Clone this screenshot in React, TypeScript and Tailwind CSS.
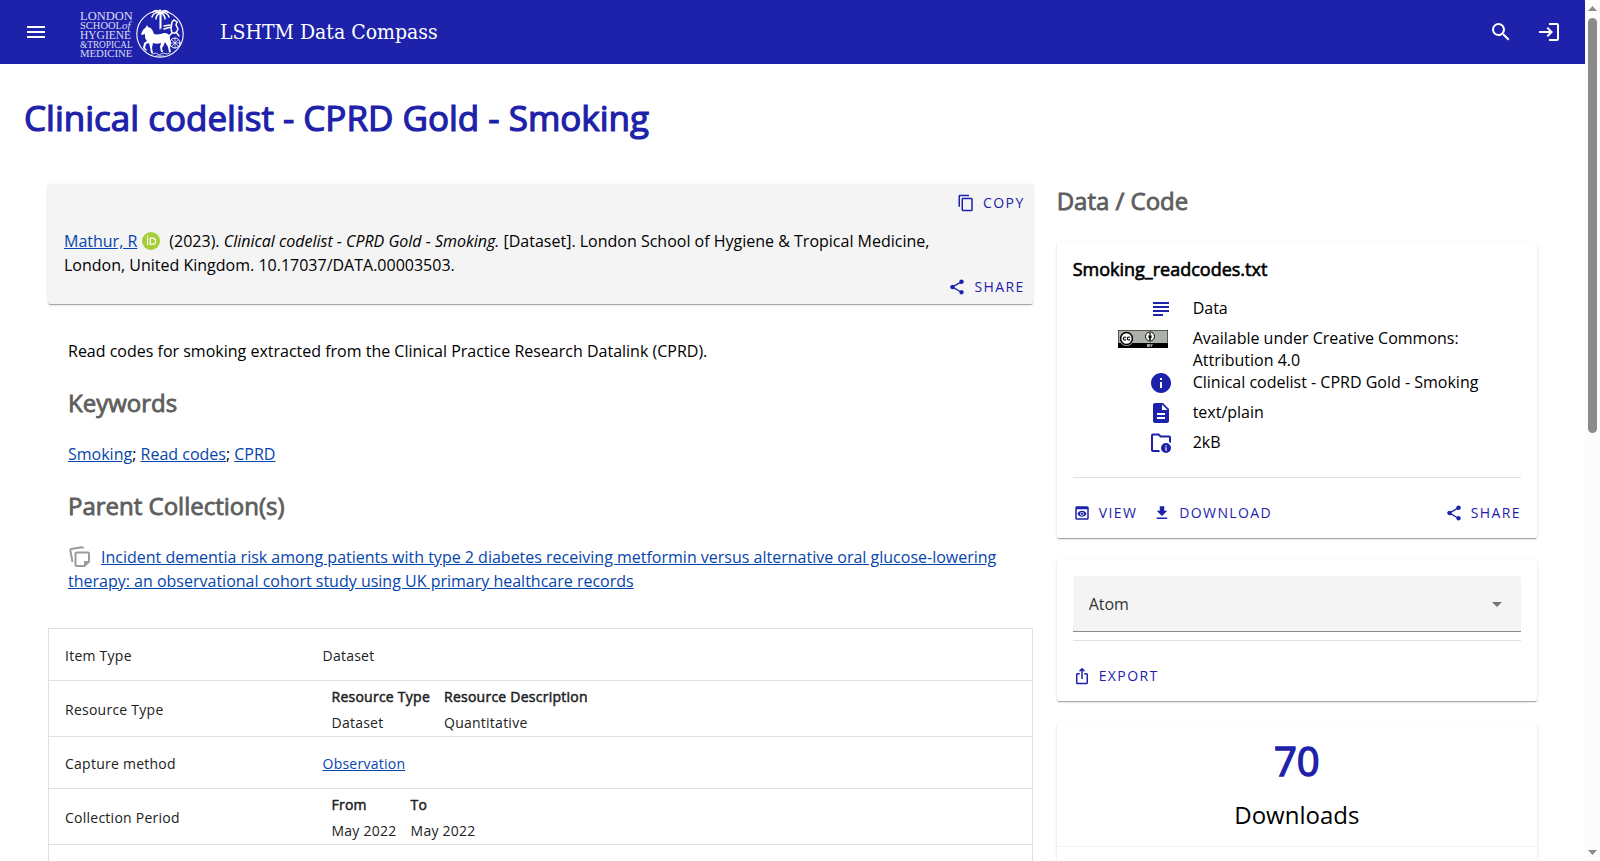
import type { ButtonHTMLAttributes, ReactNode } from "react";
import {
  MdArrowDropDown, MdContentCopy, MdDescription, MdFileDownload, MdInfo, MdIosShare,
  MdLogin, MdMenu, MdPreview, MdSearch, MdShare, MdSubject,
} from "react-icons/md";

const faux = "font-normal [-webkit-text-stroke:0.035em_currentColor]";
const card = "rounded-xs shadow-[0_2px_1px_-1px_rgba(0,0,0,0.2),0_1px_1px_0_rgba(0,0,0,0.14),0_1px_3px_0_rgba(0,0,0,0.12)]";
const link = "text-[#0645ad] underline";

function TextButton({ icon, children, className = "", ...rest }: { icon: ReactNode } & ButtonHTMLAttributes<HTMLButtonElement>) {
  return (
    <button type="button" className={`flex items-center gap-2 text-sm uppercase tracking-widest text-[#1e22aa] ${className}`} {...rest}>
      <span className="text-lg">{icon}</span>
      {children}
    </button>
  );
}

function Logo() {
  return (
    <svg width="104" height="52" viewBox="0 0 104 52" role="img" aria-label="London School of Hygiene and Tropical Medicine">
      <g fill="#dcdcf4" fontFamily="Liberation Serif, serif">
        <text x="0" y="13" fontSize="12.500">LONDON</text>
        <text x="0" y="22" fontSize="10.500">SCHOOL<tspan fontStyle="italic" fontSize="11">of</tspan></text>
        <text x="0" y="32" fontSize="11.500">HYGIENE</text>
        <text x="0" y="41" fontSize="9.300">&amp;TROPICAL</text>
        <text x="0" y="50" fontSize="10.700">MEDICINE</text>
      </g>
      <g fill="none" stroke="#fff" strokeLinecap="round">
        <circle cx="80" cy="27" r="23.2" strokeWidth="1.1" />
        <path d="M80 6v16M81 6v15" strokeWidth="1.1" />
        <path d="M80 6c-2-3-5-3-7-1M80 6c-3-1-7 0-8 4M80 6c-2 1-4 3-4 6M81 6c2-3 5-3 7-1M81 6c3-1 7 0 8 4M81 6c2 1 4 3 4 6M80 6V3" strokeWidth="1.5" />
        <circle cx="95" cy="36" r="5" />
        <path d="M90 36h10M95 31v10M91.500 32.500l7 7M98.500 32.500l-7 7" strokeWidth="0.7" />
        <path d="M92 15l2-2 3 2-1 3 2 4-2 4-4 0-1-4zM91 20l-7 2M84 19l6-1M96 25l3 4M92 26l-3 3" strokeWidth="1.5" />
        <path d="M72 47l4-1 3 2 4-2 4 1 3-1M76 49h8" strokeWidth="0.8" />
      </g>
      <path fill="#fff" d="M61 27l2-4 3-3 1-2 1 2c4 1 5 4 6 7 3 1 7 0 10-1 4 0 6 2 6 6 1 3 1 6 0 9l1 4h-2l-1-5-3-5c-1 3-2 5-3 6l1 4h-2l-1-5 1-4c-3 1-6 1-8 0l-1 5 1 5h-2l-1-6-1-4-3 1-1 4 2 2-1 1-3-3 1-5 3-2c-2-2-2-4-2-7l-3 1z" />
    </svg>
  );
}

function CcBadge() {
  return (
    <svg width="50" height="18" viewBox="0 0 50 18" role="img" aria-label="Creative Commons Attribution">
      <path fill="#000" d="M0 0h50v18H0z" />
      <path fill="#abb1a9" d="M0.500 0.500h49v12.500h-49z" />
      <circle cx="8.500" cy="8.500" r="7.500" fill="#abb1a9" />
      <circle cx="8.500" cy="8.500" r="5.900" fill="#fff" stroke="#000" strokeWidth="1.500" />
      <path fill="none" stroke="#000" strokeWidth="1.200" d="M8 7.500a1.500 1.500 0 1 0 0 2M12 7.500a1.500 1.500 0 1 0 0 2" />
      <circle cx="32" cy="6.500" r="4.500" fill="#fff" stroke="#000" />
      <circle cx="32" cy="3.900" r="0.900" />
      <path d="M30.500 5.200h3v2.800h-.7v2.500h-1.600V8h-.7z" />
      <text x="29" y="17" fontSize="4" fill="#fff" fontFamily="Liberation Sans, sans-serif" fontWeight="700">BY</text>
    </svg>
  );
}

function FolderInfo() {
  return (
    <svg width="24" height="24" viewBox="0 0 24 24" fill="currentColor" aria-hidden="true">
      <path d="M4 21q-.8 0-1.400-.6T2 19V4.500q0-.8.6-1.400T4 2.500h6l2 2h8q.8 0 1.400.6T22 6.500v5.700q-.9-1-2-1.500V6.500h-8.800l-2-2H4V19h6.200q.2 1 .8 2z" />
      <path fillRule="evenodd" d="M17 12a5 5 0 1 1 0 10 5 5 0 0 1 0-10zm-.6 4.300v3.500h1.200v-3.500zm0-2.100v1.200h1.200v-1.200z" />
    </svg>
  );
}

function NoteStack() {
  return (
    <svg className="mr-[9px] inline-block align-top text-[#9b9b9b]" width="24" height="24" viewBox="0 0 24 24" fill="none" stroke="currentColor" strokeWidth="2" aria-hidden="true">
      <path d="M4.500 17L2.300 5.200Q2.200 4.200 3.200 4L13.500 2.200Q15 2 15.300 3.500" />
      <path d="M16.500 21H8.500Q7.500 21 7.500 20V8.500Q7.500 7.500 8.500 7.500H20Q21 7.500 21 8.500V16.500z" />
      <path fill="currentColor" stroke="none" d="M16 22v-6h6z" />
    </svg>
  );
}

function Orcid() {
  return (
    <svg className="my-[3px] ml-[5px] mr-[9px] inline-block align-top" width="18" height="18" viewBox="0 0 18 18" role="img" aria-label="ORCID">
      <circle cx="9" cy="9" r="9" fill="#a6ce39" />
      <g fill="none" stroke="#fff" strokeWidth="1.200">
        <path d="M5.600 5.800v7.200M8.300 6.200h2.200a3.100 3.100 0 0 1 0 6.200H8.300z" />
      </g>
      <circle cx="5.600" cy="4.200" r="0.800" fill="#fff" />
    </svg>
  );
}

function Detail({ icon, children }: { icon: ReactNode; children: ReactNode }) {
  return (
    <div className="flex min-h-[30px] gap-5 leading-[22px]">
      <dt className="flex w-[100px] shrink-0 justify-end text-2xl text-[#1e22aa]">{icon}</dt>
      <dd>{children}</dd>
    </div>
  );
}

function Row({ label, children, nested = false }: { label: string; children: ReactNode; nested?: boolean }) {
  return (
    <tr className={`border border-[#e0e0e0] ${nested ? "h-14" : "h-[52px]"}`}>
      <th scope="row" className="w-[258px] px-4 pt-0.5 text-left font-normal">{label}</th>
      <td className="px-4 pt-0.5">{children}</td>
    </tr>
  );
}

function Pairs({ heads, values }: { heads: string[]; values: string[] }) {
  return (
    <table className="ml-[9px] leading-5">
      <thead>
        <tr>{heads.map((h) => <th key={h} scope="col" className={`pb-[6px] pr-[14px] text-left ${faux}`}>{h}</th>)}</tr>
      </thead>
      <tbody>
        <tr>{values.map((v, i) => <td key={i} className="pr-[14px]">{v}</td>)}</tr>
      </tbody>
    </table>
  );
}

export default function App() {
  return (
    <div className="flex h-screen overflow-hidden bg-white font-['Open_Sans','Noto_Sans',sans-serif] text-base text-black">
      <div className="min-w-0 flex-1">
        <header className="flex h-16 items-center bg-[#1e22aa] px-6 text-2xl text-white">
          <button type="button" aria-label="Menu"><MdMenu /></button>
          <a href="#home" className="ml-8 pt-px"><Logo /></a>
          <a href="#home" className="ml-9 font-['DejaVu_Serif_Condensed','DejaVu_Serif',serif] text-[21px]">LSHTM Data Compass</a>
          <div className="ml-auto flex gap-6">
            <button type="button" aria-label="Search"><MdSearch /></button>
            <button type="button" aria-label="Log in"><MdLogin /></button>
          </div>
        </header>
        <h1 className={`px-6 pt-8 text-[35px] leading-[44px] text-[#1e22aa] ${faux}`}>Clinical codelist - CPRD Gold - Smoking</h1>
        <div className="grid grid-cols-12 gap-6 px-12 pt-11">
          <main className="col-span-8">
            <section className={`bg-[#f4f4f4] ${card}`}>
              <div className="mb-[7px] flex h-[38px] items-center justify-end pr-2">
                <TextButton icon={<MdContentCopy />}>Copy</TextButton>
              </div>
              <p className="pl-4 pr-12 leading-6">
                <a href="#author" className={link}>Mathur, R</a><Orcid />
                (2023). <cite>Clinical codelist - CPRD Gold - Smoking.</cite> [Dataset]. London School of Hygiene &amp; Tropical Medicine, London, United Kingdom. 10.17037/DATA.00003503.
              </p>
              <div className="flex h-[27px] items-start justify-end pr-2">
                <TextButton icon={<MdShare />} className="h-5">Share</TextButton>
              </div>
            </section>
            <div className="px-5 pt-[35px] leading-6">
              <p>Read codes for smoking extracted from the Clinical Practice Research Datalink (CPRD).</p>
              <h2 className={`mt-6 text-2xl text-[#5e5e5e] ${faux}`}>Keywords</h2>
              <p className="mt-[23px]"><a href="#smoking" className={link}>Smoking</a>; <a href="#read" className={link}>Read codes</a>; <a href="#cprd" className={link}>CPRD</a></p>
              <h2 className={`mt-6 text-2xl text-[#5e5e5e] ${faux}`}>Parent Collection(s)</h2>
              <p className="mt-[23px]"><NoteStack /><a href="#parent" className={link}>Incident dementia risk among patients with type 2 diabetes receiving metformin versus alternative oral glucose-lowering therapy: an observational cohort study using UK primary healthcare records</a></p>
            </div>
            <table className="mt-[35px] w-full border-collapse text-sm tracking-[0.0178em] text-[#212121]">
              <tbody>
                <Row label="Item Type">Dataset</Row>
                <Row label="Resource Type" nested><Pairs heads={["Resource Type", "Resource Description"]} values={["Dataset", "Quantitative"]} /></Row>
                <Row label="Capture method"><a href="#observation" className={link}>Observation</a></Row>
                <Row label="Collection Period" nested><Pairs heads={["From", "To"]} values={["May 2022", "May 2022"]} /></Row>
                <Row label="">{null}</Row>
              </tbody>
            </table>
          </main>
          <aside className="col-span-4">
            <h2 className={`text-2xl leading-[34px] text-[#5e5e5e] ${faux}`}>Data / Code</h2>
            <section className={`mt-[23px] px-4 pt-[15px] ${card}`}>
              <h3 className={`text-lg leading-[26px] ${faux}`}>Smoking_readcodes.txt</h3>
              <dl className="mt-[15px]">
                <Detail icon={<MdSubject />}>Data</Detail>
                <Detail icon={<span className="mr-[5px] pt-[3px]"><CcBadge /></span>}>Available under Creative Commons: Attribution 4.0</Detail>
                <Detail icon={<MdInfo />}>Clinical codelist - CPRD Gold - Smoking</Detail>
                <Detail icon={<MdDescription />}>text/plain</Detail>
                <Detail icon={<FolderInfo />}>2kB</Detail>
              </dl>
              <div className="mt-4 flex h-[61px] gap-4 border-t border-[#e0e0e0] pb-[7px] pt-4">
                <TextButton icon={<MdPreview />}>View</TextButton>
                <TextButton icon={<MdFileDownload />}>Download</TextButton>
                <TextButton icon={<MdShare />} className="ml-auto">Share</TextButton>
              </div>
            </section>
            <section className={`mt-[22px] px-4 pt-4 ${card}`}>
              <div className="relative">
                <select aria-label="Export format" className="h-14 w-full appearance-none rounded-t border-b border-[#8a8a8a] bg-[#f4f4f4] px-4 text-[#333]">
                  <option>Atom</option>
                </select>
                <MdArrowDropDown className="pointer-events-none absolute right-3 top-4 text-2xl text-[#757575]" />
              </div>
              <div className="mt-2 flex h-[61px] border-t border-[#e0e0e0] pb-[7px] pt-4">
                <TextButton icon={<MdIosShare />}>Export</TextButton>
              </div>
            </section>
            <section className={`mt-[22px] text-center ${card}`}>
              <div className="h-[124px] border-b border-[#f2f2f2] pt-3">
                <p className={`text-[40px] leading-[52px] text-[#1e22aa] ${faux}`}>70</p>
                <p className="mt-[10px] text-2xl leading-9">Downloads</p>
              </div>
              <div className="h-24" />
            </section>
          </aside>
        </div>
      </div>
      <div className="flex w-[15px] shrink-0 flex-col items-center bg-[#fcfcfc] py-[6px]" aria-hidden="true">
        <svg width="9" height="5" viewBox="0 0 9 5" fill="#8b8b8b"><path d="M0 5h9L4.500 0z" /></svg>
        <div className="mt-[7px] h-[415px] w-[9px] rounded-full bg-[#8b8b8b]" />
        <svg className="mt-auto" width="9" height="5" viewBox="0 0 9 5" fill="#8b8b8b"><path d="M0 0h9L4.500 5z" /></svg>
      </div>
    </div>
  );
}
